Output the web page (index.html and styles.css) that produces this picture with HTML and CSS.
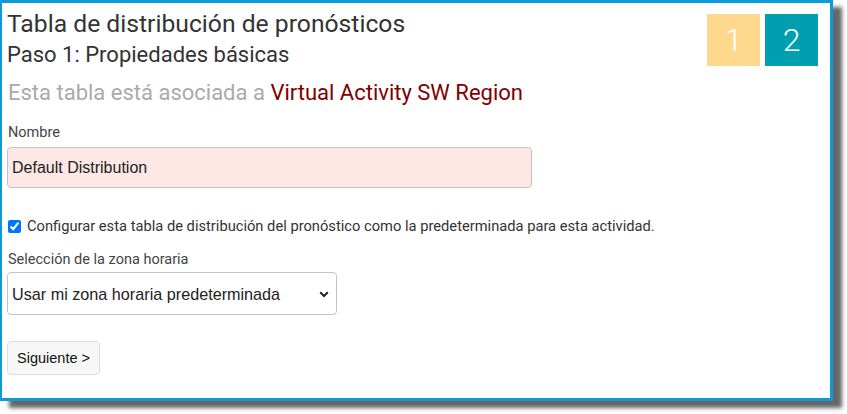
FILE: index.html
```html
<!DOCTYPE html>
<html lang="es">
<head>
<meta charset="utf-8">
<title>Tabla de distribución de pronósticos</title>
<link rel="stylesheet" href="styles.css">
</head>
<body>
<div class="frame">
  <div class="header">
    <div class="titles">
      <h1 class="title">Tabla de distribución de pronósticos</h1>
      <h2 class="subtitle">Paso 1: Propiedades básicas</h2>
    </div>
    <div class="steps">
      <div class="step step-done">1</div>
      <div class="step step-active">2</div>
    </div>
  </div>
  <p class="assoc">Esta tabla está asociada a <span class="assoc-name">Virtual Activity SW Region</span></p>
  <label class="field-label" for="nombre">Nombre</label>
  <input class="text-input" id="nombre" type="text" value="Default Distribution">
  <label class="check-row">
    <input class="check" type="checkbox" checked>
    <span>Configurar esta tabla de distribución del pronóstico como la predeterminada para esta actividad.</span>
  </label>
  <label class="field-label tz-label" for="tz">Selección de la zona horaria</label>
  <div class="select-wrap">
    <select class="select" id="tz">
      <option>Usar mi zona horaria predeterminada</option>
    </select>
    <svg class="chevron" width="10" height="7" viewBox="0 0 10 7"><path d="M1.2 1.2 L5 5 L8.8 1.2" fill="none" stroke="#222" stroke-width="2"/></svg>
  </div>
  <div class="actions">
    <button class="btn" type="button">Siguiente &gt;</button>
  </div>
</div>
</body>
</html>
```
FILE: styles.css
```css
html, body {
  margin: 0;
  padding: 0;
  background: #ffffff;
}
body {
  width: 847px;
  height: 414px;
  overflow: hidden;
  font-family: Roboto, "Liberation Sans", sans-serif;
}
.frame {
  box-sizing: border-box;
  width: 833px;
  height: 401px;
  border: 3px solid #0c9ad8;
  border-left-width: 2px;
  background: #fff;
  box-shadow: 9px 7px 4px rgba(0, 0, 0, 0.6);
  padding: 6px 0 0 5px;
  display: flex;
  flex-direction: column;
  align-items: flex-start;
}
.header {
  display: flex;
  justify-content: space-between;
  align-self: stretch;
  padding-right: 12px;
}
.title {
  margin: 0;
  font-size: 24.7px;
  line-height: 30px;
  font-weight: 400;
  color: #333;
}
.subtitle {
  margin: 3px 0 0;
  font-size: 22px;
  line-height: 26px;
  font-weight: 400;
  color: #333;
}
.steps {
  display: flex;
  gap: 5px;
  margin-top: 5px;
}
.step {
  width: 53px;
  height: 52px;
  display: flex;
  align-items: center;
  justify-content: center;
  color: #fff;
  font-size: 32px;
  font-weight: 300;
}
.step-done { background: #fed98d; }
.step-active { background: #009fb0; }
.assoc {
  margin: 12px 0 0 1px;
  font-size: 22px;
  line-height: 26px;
  color: #aaa;
}
.assoc-name { color: #7f0000; }
.field-label {
  display: block;
  margin-top: 17px;
  font-size: 14.5px;
  line-height: 20px;
  color: #444;
  padding-left: 1px;
}
.text-input {
  box-sizing: border-box;
  margin: 4px 0 0;
  width: 525px;
  height: 41px;
  border: 1px solid #c4c4c4;
  border-radius: 4px;
  background: #fde8e6;
  padding: 0 4px;
  font-family: "Liberation Sans", Arial, sans-serif;
  font-size: 16px;
  color: #222;
}
.check-row {
  display: flex;
  align-items: center;
  margin-top: 28px;
  font-size: 14.7px;
  line-height: 20px;
  color: #333;
}
.check {
  width: 13px;
  height: 13px;
  margin: 0 6px 0 1px;
  accent-color: #0075ff;
}
.tz-label { margin-top: 14px; }
.select-wrap {
  position: relative;
  margin-top: 2px;
}
.select {
  box-sizing: border-box;
  width: 330px;
  height: 43px;
  border: 1px solid #c4c4c4;
  border-radius: 4px;
  background: #fff;
  padding: 0 4px;
  font-family: "Liberation Sans", Arial, sans-serif;
  font-size: 16.2px;
  color: #222;
  appearance: none;
  -webkit-appearance: none;
}
.chevron {
  position: absolute;
  right: 8px;
  top: 19px;
  pointer-events: none;
}
.actions { margin-top: 26px; }
.btn {
  box-sizing: border-box;
  width: 93px;
  height: 34px;
  border: 1px solid #dcdcdc;
  border-radius: 4px;
  background: #f7f7f7;
  font-family: "Liberation Sans", Arial, sans-serif;
  font-size: 14.5px;
  color: #111;
  padding: 0;
}
```
